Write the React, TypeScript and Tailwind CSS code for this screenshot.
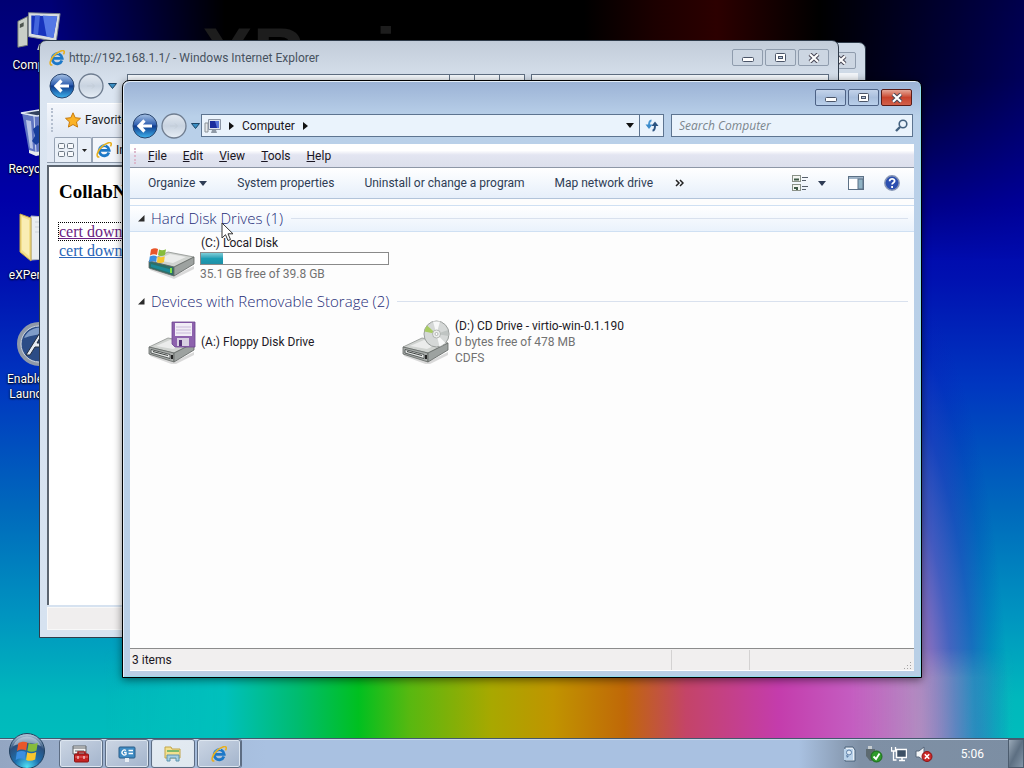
import type { ReactNode } from "react";

const menuItems = ["File", "Edit", "View", "Tools", "Help"];

const commands = [
  "System properties",
  "Uninstall or change a program",
  "Map network drive",
];

function CaretDown() {
  return (
    <svg width="8" height="5" viewBox="0 0 8 5">
      <path d="M0 0h8L4 5z" fill="currentColor" />
    </svg>
  );
}

function CaretRight() {
  return (
    <svg width="5" height="8" viewBox="0 0 5 8">
      <path d="M0 0v8l5-4z" fill="#111" />
    </svg>
  );
}

function IeIcon() {
  return (
    <svg width="16" height="16" viewBox="0 0 16 16">
      <path
        d="M12.900 10.500A5 5 0 1 1 13.200 8.300H4.500"
        fill="none"
        stroke="#1c78c8"
        strokeWidth="2.8"
      />
      <path d="M3.400 7A5 5 0 0 1 10 3.600" fill="none" stroke="#6fc8f4" strokeWidth="1" />
      <path
        d="M3.400 15C-.6 15.600 1 9 6 4.600 10 1 14.600-.4 15.200 1.400c.3 1-.2 2-.8 3"
        fill="none"
        stroke="#e8b020"
        strokeWidth="1.600"
      />
    </svg>
  );
}

function MonitorIcon() {
  return (
    <svg width="46" height="46" viewBox="0 0 48 48">
      <path d="M2 16l10-5v30l-10 2z" fill="#c9cfc8" stroke="#6f7672" />
      <path d="M4 19l4-2v4l-4 2z" fill="#4d554f" />
      <path d="M24 40l10-4 6 4-6 6H22z" fill="#b9c0c4" />
      <path d="M13 7l33 1-4 29-29-5z" fill="#d9dee2" stroke="#7c858c" />
      <path d="M16 10l27 1-4 22-23-4z" fill="#1733bd" />
      <path d="M28 10l15 1-4 22-7-1z" fill="#5478e6" />
      <path d="M20 10h5l-2 20-5-1z" fill="#4465dc" />
    </svg>
  );
}

function SmallMonitorIcon() {
  return (
    <svg width="17" height="16" viewBox="0 0 17 16">
      <path d="M1 5h3v9H1z" fill="#e4e7ea" stroke="#8b9297" />
      <path d="M8 12h4l1 3H7z" fill="#8f9aa6" />
      <path d="M4.500 1.500h12v10h-12z" fill="#dfe4ec" stroke="#8b95a5" />
      <path d="M6 3h9v7H6z" fill="#1b2d9e" />
      <path d="M11 3h4v7h-2z" fill="#5673d8" />
    </svg>
  );
}

function NavButtons() {
  return (
    <div className="flex items-center gap-[5px]">
      <button aria-label="Back" className="size-6">
        <svg width="26" height="26" viewBox="0 0 26 26" className="-ml-px -mt-px">
          <defs>
            <linearGradient id="back" x1="0" y1="0" x2="0" y2="1">
              <stop offset="0" stopColor="#a9c4e6" />
              <stop offset="0.45" stopColor="#2f5fb0" />
              <stop offset="0.5" stopColor="#0f3a8c" />
              <stop offset="1" stopColor="#3fb4ee" />
            </linearGradient>
          </defs>
          <circle cx="13" cy="13" r="12" fill="url(#back)" stroke="#29456e" />
          <path
            d="M20 13H8M12.500 7.500L7 13l5.500 5.500"
            fill="none"
            stroke="#fff"
            strokeWidth="3.200"
          />
        </svg>
      </button>
      <button aria-label="Forward" className="size-6">
        <svg width="26" height="26" viewBox="0 0 26 26" className="-ml-px -mt-px">
          <defs>
            <linearGradient id="forward" x1="0" y1="0" x2="0" y2="1">
              <stop offset="0" stopColor="#e3e9f1" />
              <stop offset="0.5" stopColor="#c8d3e0" />
              <stop offset="1" stopColor="#e6eef6" />
            </linearGradient>
          </defs>
          <circle cx="13" cy="13" r="12" fill="url(#forward)" stroke="#6f7d90" strokeWidth="1.300" />
          <path d="M9 13h7M14 10.500l2.500 2.500-2.500 2.500" fill="none" stroke="#c3cdd8" />
        </svg>
      </button>
      <button aria-label="Recent pages">
        <svg width="9" height="6" viewBox="0 0 9 6">
          <path d="M.5.5h8l-4 5z" fill="#3b8fc4" stroke="#1d4566" />
        </svg>
      </button>
    </div>
  );
}

function WindowButtons({ active = false }: { active?: boolean }) {
  const base = active
    ? "border-[#4d6285] bg-linear-to-b from-[#c3d3ea] via-[#a9bfdd] to-[#b9cfea]"
    : "border-[#8f9cad] bg-[#ccd6e2]";
  const close = active
    ? "border-[#5a1c18] bg-linear-to-b from-[#e3a596] via-[#c8432c] to-[#d2604a]"
    : "border-[#8f9cad] bg-[#ccd6e2]";

  return (
    <div className="flex gap-0.5">
      <button
        aria-label="Minimize"
        className={`flex h-[17px] w-[31px] items-center justify-center rounded-[2px] border ${base}`}
      >
        <svg width="12" height="9" viewBox="0 0 12 9">
          <rect x=".5" y="4.5" width="11" height="4" rx="1" fill="#fff" stroke="#4b5568" />
        </svg>
      </button>
      <button
        aria-label="Maximize"
        className={`flex h-[17px] w-[31px] items-center justify-center rounded-[2px] border ${base}`}
      >
        <svg width="11" height="9" viewBox="0 0 11 9">
          <rect x=".5" y=".5" width="10" height="8" rx="1" fill="#fff" stroke="#4b5568" />
          <rect x="3.500" y="3.500" width="4" height="2" fill="#b9c8de" stroke="#4b5568" />
        </svg>
      </button>
      <button
        aria-label="Close"
        className={`flex h-[17px] w-[31px] items-center justify-center rounded-[2px] border ${close}`}
      >
        <svg width="12" height="10" viewBox="0 0 12 10">
          <path d="M2 1.200l8 7.600M10 1.200L2 8.800" stroke="#4b4a58" strokeWidth="4.200" />
          <path d="M2 1.200l8 7.600M10 1.200L2 8.800" stroke="#fff" strokeWidth="2.200" />
        </svg>
      </button>
    </div>
  );
}

function DriveBody({ y, system }: { y: number; system?: boolean }) {
  return (
    <g transform={`translate(0 ${y})`}>
      <path d="M2 15l24 9 20-10v3L26 27 2 18z" fill="#000" opacity=".14" />
      <path d="M1 9L20 0l26 5-20 10z" fill="#d0d3d0" stroke="#8d918e" strokeWidth=".8" />
      <path d="M8 8l14-6 16 3-13 6z" fill="#ebeceb" />
      <path
        d="M1 9l25 6v9L1 16z"
        fill={system ? "#2d6f68" : "#a8acaa"}
        stroke="#5f6462"
        strokeWidth=".8"
      />
      <path d="M26 15l20-10v7L26 24z" fill="#9da2a0" stroke="#5f6462" strokeWidth=".8" />
      {system ? (
        <>
          <path d="M3 12l20 5.500V21L3 15z" fill="#1d8896" />
          <rect x="22" y="16" width="2" height="5" fill="#7fe04a" />
        </>
      ) : (
        <>
          <path d="M3 11.500l19 5v4L3 15z" fill="#e4e6e5" stroke="#3e4341" strokeWidth=".8" />
          <path d="M5 13.500l15 4" stroke="#3e4341" />
          <rect x="23" y="17" width="2" height="4" fill="#222" />
        </>
      )}
    </g>
  );
}

function WindowsFlag() {
  return (
    <>
      <path d="M1 2.500C3.500 1 6 1 8 2L7 8C5 7 2.500 7 0 8.500z" fill="#e8562a" />
      <path d="M9 2.400c2 1 4.500 1 7-.2L15 8c-2.500 1.300-5 1.300-7 .3z" fill="#86bc3c" />
      <path d="M-.2 9.500c2.500-1.300 5-1.300 7-.3L6 15c-2-1-4.500-1-7 .3z" fill="#3a8ee0" />
      <path d="M7.800 9.500c2 1 4.500 1 7-.2L14 15c-2.500 1.300-5 1.300-7 .3z" fill="#f7c62e" />
    </>
  );
}

function LocalDiskIcon() {
  return (
    <svg width="48" height="44" viewBox="0 0 48 44">
      <DriveBody y={15} system />
      <g transform="translate(2 10)">
        <WindowsFlag />
      </g>
    </svg>
  );
}

function FloppyDriveIcon() {
  return (
    <svg width="48" height="44" viewBox="0 0 48 44">
      <DriveBody y={18} />
      <path d="M24 2h23v25H27l-3-3z" fill="#8d62ad" stroke="#6c4590" strokeWidth=".8" />
      <rect x="27" y="3" width="17" height="13" fill="#f1edf6" />
      <path d="M28 7h15M28 10h15M28 13h15" stroke="#c9b9da" />
      <rect x="29" y="18" width="12" height="8" fill="#d8cfe2" />
      <rect x="31" y="20" width="3" height="6" fill="#57347a" />
    </svg>
  );
}

function CdDriveIcon() {
  return (
    <svg width="48" height="44" viewBox="0 0 48 44">
      <DriveBody y={18} />
      <ellipse cx="34.500" cy="14" rx="12.500" ry="13" fill="#d5d8d7" stroke="#9a9e9c" />
      <path d="M34.500 14L25 5.500a12 12 0 0 0-2.500 6z" fill="#a8cc62" />
      <path d="M34.500 14L31 1.500l7 0z" fill="#f7f8f8" />
      <path d="M34.500 14l9 9-6 3.500z" fill="#f7f8f8" />
      <path d="M34.500 14L46 10l.5 6z" fill="#bfc4c2" />
      <circle cx="34.500" cy="14" r="4" fill="#eceeed" stroke="#a4a8a6" strokeWidth=".8" />
      <circle cx="34.500" cy="14" r="1.500" fill="#fff" stroke="#8b8f8d" strokeWidth=".6" />
    </svg>
  );
}

function RecycleBinIcon() {
  return (
    <svg width="40" height="48" viewBox="0 0 40 48">
      <path d="M3 5l30-2 4 2-6 38-15 3-6-3z" fill="#7f9bd0" opacity=".75" />
      <path d="M3 5l12 3 22-3M15 8l2 37" fill="none" stroke="#d3def2" />
      <path d="M2 5l18-3 18 3-20 3z" fill="#33415f" stroke="#dfe7f4" strokeWidth="1.500" />
      <path d="M7 12l5 1 2 28-3-1z" fill="#dbe4f5" opacity=".7" />
      <path d="M14 21l5-4 4 5-3 3 3 7-6 5-4-4 3-5z" fill="#183e9c" />
      <path d="M10 42l7 2 14-2v3l-14 3-7-3z" fill="#e7ecec" />
    </svg>
  );
}

function FolderIcon() {
  return (
    <svg width="44" height="50" viewBox="0 0 44 50">
      <path d="M14 4l28 2v40l-28 2z" fill="#e9ecf0" stroke="#b5bac2" />
      <path d="M3 2l11 4v43L3 40z" fill="#f2df8c" stroke="#c5a74a" />
      <path d="M5 5l7 3v36l-7-6z" fill="#f9edb4" />
      <path d="M18 10h20M18 15h20M18 20h20" stroke="#cdd2d9" />
    </svg>
  );
}

function LauncherIcon() {
  return (
    <svg width="44" height="44" viewBox="0 0 44 44">
      <circle cx="22" cy="22" r="20" fill="#2b4c86" stroke="#8f99a8" strokeWidth="4" />
      <circle cx="22" cy="22" r="18" fill="none" stroke="#d3d9e1" />
      <path d="M7 16a17 17 0 0 1 29-4c-10-1-20 1-29 4z" fill="#7f9cc8" />
      <path d="M9 33L24 9h4v25h-4v-9h-6l-5 8zM20 21h4v-7z" fill="#e6ebf2" stroke="#222c3c" />
    </svg>
  );
}

function DesktopIcon({ icon, children }: { icon: ReactNode; children: ReactNode }) {
  return (
    <a
      href="#"
      className="flex w-[78px] flex-col items-center gap-1.5 text-center text-[12px] leading-[15px] text-white [text-shadow:0_1px_2px_#000,0_0_2px_#000]"
    >
      {icon}
      <span>{children}</span>
    </a>
  );
}

function GroupHeader({
  id,
  title,
  hovered = false,
}: {
  id: string;
  title: string;
  hovered?: boolean;
}) {
  return (
    <div
      className={`flex h-[27px] items-center border-y pb-px pl-2 pr-1.5 ${
        hovered
          ? "border-[#cfe0f3] bg-linear-to-b from-white to-[#eaf2fc]"
          : "border-transparent"
      }`}
    >
      <svg width="7" height="7" viewBox="0 0 7 7">
        <path d="M6.500 0v6.500H0z" fill="#2b2b2b" />
      </svg>
      <h2
        id={id}
        className="ml-1.5 font-['Open_Sans',sans-serif] text-[15px] font-light leading-5 text-[#1e2c78]"
      >
        {title}
      </h2>
      <div className="ml-2 h-px flex-1 bg-[#d9e1ee]" />
    </div>
  );
}

function InternetExplorer() {
  return (
    <section
      aria-label="Windows Internet Explorer"
      className="absolute bottom-[100px] left-[39px] right-[185px] top-[40px] flex flex-col rounded-t-[7px] border border-[#2f3b4a] bg-linear-to-b from-[#c2ccd9] via-[#dbe5f1] via-8% to-[#d6e2f0] px-[7px] pb-[7px]"
    >
      <header className="flex h-[33px] items-center gap-1 px-0.5">
        <IeIcon />
        <h1 className="flex-1 text-[12px] text-[#47525f]">
          http://192.168.1.1/ - Windows Internet Explorer
        </h1>
        <WindowButtons />
      </header>
      <div className="flex h-[29px] items-start gap-2.5 pl-[3px]">
        <NavButtons />
        <div className="flex flex-1">
          <input
            aria-label="Address"
            className="h-[22px] flex-1 border border-[#5f6f82] bg-[#f4f8fc]"
          />
          <div className="w-[25px] border-y border-r border-[#5f6f82] bg-[#f4f8fc]" />
          <div className="w-[25px] border-y border-r border-[#5f6f82] bg-[#f4f8fc]" />
          <div className="w-[25px] border-y border-r border-[#5f6f82] bg-[#f4f8fc]" />
        </div>
        <input
          aria-label="Search"
          className="-ml-1 mr-0.5 h-[22px] w-[298px] border border-[#5f6f82] bg-[#f4f8fc]"
        />
      </div>
      <div className="flex h-8 items-center border-t border-white bg-linear-to-b from-[#f4f7fc] to-[#e2e9f4] pl-1">
        <div className="h-6 border-l-2 border-dotted border-[#b5bfcf]" />
        <button className="ml-3 flex items-center gap-1 text-[12px] text-[#222]">
          <svg width="16" height="16" viewBox="0 0 16 16">
            <path
              d="M8 .8l2.200 4.900 5.300.6-4 3.600 1.100 5.200L8 12.500l-4.600 2.600 1.100-5.200-4-3.600 5.300-.6z"
              fill="#fbb326"
              stroke="#c77a0c"
            />
          </svg>
          Favorites
        </button>
      </div>
      <div className="flex h-7 items-end border-b border-[#8d99aa] bg-[#e2e9f4] pl-[7px]">
        <div className="flex h-[25px] items-center rounded-t-[2px] border border-b-0 border-[#98a4b5] bg-[#eaf0f8]">
          <button aria-label="Quick tabs" className="flex h-full w-[22px] items-center justify-center">
            <svg width="16" height="14" viewBox="0 0 16 14" fill="#f7f9fc" stroke="#6d7885">
              <rect x=".5" y=".5" width="6" height="5" rx="1" />
              <rect x="9.500" y=".5" width="6" height="5" rx="1" />
              <rect x=".5" y="8.500" width="6" height="5" rx="1" />
              <rect x="9.500" y="8.500" width="6" height="5" rx="1" />
            </svg>
          </button>
          <button
            aria-label="Tab list"
            className="flex h-full w-[14px] items-center justify-center border-l border-[#98a4b5] text-[#222]"
          >
            <svg width="5" height="3" viewBox="0 0 5 3">
              <path d="M0 0h5L2.500 3z" fill="currentColor" />
            </svg>
          </button>
        </div>
        <div className="flex h-[25px] w-[200px] items-center gap-1 border border-b-0 border-[#98a4b5] bg-[#f3f6fb] pl-[3px] text-[12px] text-[#222]">
          <IeIcon />
          Internet
        </div>
      </div>
      <div className="mt-0.5 flex-1 border-l-2 border-t-2 border-[#5c6570] bg-white px-2.5 pt-[15px] font-['Liberation_Serif',serif]">
        <h2 className="text-[19px] font-bold leading-5 text-black">CollabNet</h2>
        <ul className="mt-5 text-[16px] leading-[19px]">
          <li>
            <a
              href="#"
              className="text-[#6b1d82] underline outline-1 outline-dotted outline-black"
            >
              cert download
            </a>
          </li>
          <li>
            <a href="#" className="text-[#2a65b8] underline">
              cert download
            </a>
          </li>
        </ul>
      </div>
      <footer className="mt-0.5 h-[23px] border border-[#f8f8f8] bg-[#f0eeee]" />
    </section>
  );
}

function Explorer() {
  return (
    <section
      aria-label="Computer"
      className="absolute bottom-[60px] left-[122px] right-[102px] top-[80px] flex flex-col rounded-t-[7px] border border-black bg-linear-to-b from-[#9bb2d5] via-[#b9d0e9] via-6% to-[#b9cfe6] px-[7px] pb-1.5 shadow-[inset_1px_1px_0_#e3edf8,inset_-1px_-1px_0_#8fdcec,0_2px_8px_rgba(0,0,0,0.5)]"
    >
      <header className="flex h-[33px] justify-end pr-0.5 pt-2">
        <WindowButtons active />
      </header>
      <div className="flex h-[30px] items-start gap-px pl-[3px]">
        <NavButtons />
        <div className="flex h-[23px] flex-1 border border-[#5d7490] bg-[#eaf3fc]">
          <div className="flex flex-1 items-center gap-2 pl-0.5 text-[12px] text-[#1a1522]">
            <SmallMonitorIcon />
            <CaretRight />
            <a href="#">Computer</a>
            <CaretRight />
          </div>
          <button
            aria-label="Previous locations"
            className="flex w-[19px] items-center justify-center text-[#111]"
          >
            <CaretDown />
          </button>
          <button
            aria-label="Refresh"
            className="flex w-6 items-center justify-center border-l border-[#5d7490]"
          >
            <svg width="14" height="13" viewBox="0 0 14 13" fill="none" strokeWidth="2">
              <path d="M6.500 1.500C4.500 1.500 4 3 4 6.500" stroke="#4a97d2" />
              <path d="M.5 5.500h7L4 10z" fill="#3b8bcb" />
              <path d="M7.500 11.500c2 0 2.500-1.500 2.500-5" stroke="#2c5482" />
              <path d="M6.500 7h7L10 2.500z" fill="#2c5482" />
            </svg>
          </button>
        </div>
        <div className="ml-1.5 mr-px flex h-[23px] w-[242px] items-center border border-[#5d7490] bg-[#eaf3fc] pr-1">
          <input
            aria-label="Search Computer"
            placeholder="Search Computer"
            className="min-w-0 flex-1 pl-[7px] font-['Open_Sans',sans-serif] text-[12px] italic outline-none placeholder:text-[#7b858c]"
          />
          <svg width="13" height="13" viewBox="0 0 13 13" fill="none" stroke="#43617f">
            <circle cx="8" cy="5" r="3.800" strokeWidth="1.600" />
            <path d="M5 8l-4 4" strokeWidth="2.400" />
          </svg>
        </div>
      </div>
      <nav className="flex h-[23px] items-center gap-4 border-t border-white bg-linear-to-b from-white from-25% via-[#e3e5f1] via-45% to-[#dcdfec] pb-px pl-1 text-[12px] text-[#1a1522]">
        <div className="-mr-1 h-4 border-l-2 border-dotted border-[#dcb9cd]" />
        {menuItems.map((item) => (
          <button key={item}>
            <span className="underline">{item[0]}</span>
            {item.slice(1)}
          </button>
        ))}
      </nav>
      <div className="flex h-8 items-center gap-[30px] border-y border-t-[#8d96a6] border-b-[#b2c4da] bg-linear-to-b from-white to-[#e6effa] pl-[18px] pr-3.5 text-[12px] text-[#2e3c54]">
        <button className="flex items-center gap-1">
          Organize
          <CaretDown />
        </button>
        {commands.map((command) => (
          <button key={command} className="whitespace-nowrap">
            {command}
          </button>
        ))}
        <button aria-label="More commands" className="-ml-2">
          <svg width="9" height="8" viewBox="0 0 9 8" fill="none" stroke="#222" strokeWidth="1.500">
            <path d="M1 1l3 3-3 3M5 1l3 3-3 3" />
          </svg>
        </button>
        <div className="ml-auto flex items-center">
          <button aria-label="Change your view" className="flex items-center gap-2.5">
            <svg width="16" height="16" viewBox="0 0 16 16">
              <rect x=".5" y=".5" width="8" height="6" fill="#f4f6f2" stroke="#8a9188" />
              <rect x=".5" y="9.500" width="8" height="6" fill="#f4f6f2" stroke="#8a9188" />
              <path d="M2 4.500h5M2 13h2M5 12v3" stroke="#3f5a48" strokeWidth="2" />
              <path d="M10 2.500h6M10 5.500h4M10 11.500h6M10 14.500h4" stroke="#565f6b" />
            </svg>
            <CaretDown />
          </button>
          <button aria-label="Show the preview pane" className="ml-[22px]">
            <svg width="16" height="14" viewBox="0 0 16 14">
              <rect x=".5" y=".5" width="15" height="13" fill="#fff" stroke="#5c7186" />
              <path d="M1 2h14" stroke="#9fb4c8" strokeWidth="2" />
              <rect x="10" y="3" width="5" height="10" fill="#8fb2c4" stroke="#5c7186" />
            </svg>
          </button>
          <button aria-label="Get help" className="ml-5">
            <svg width="16" height="16" viewBox="0 0 16 16">
              <circle cx="8" cy="8" r="7.200" fill="#2b4fb0" stroke="#8796b5" strokeWidth="1.500" />
              <path
                d="M5.600 6.200c0-3.200 5-3 5-.2 0 1.900-2.500 1.800-2.500 3.600M8.100 11v2"
                fill="none"
                stroke="#fff"
                strokeWidth="1.800"
              />
            </svg>
          </button>
        </div>
      </div>

      <main className="flex flex-1 flex-col gap-1.5 bg-[#fdfdfd] pt-1.5 text-[12px] leading-4">
        <section aria-labelledby="hard-disks">
          <GroupHeader id="hard-disks" title="Hard Disk Drives (1)" hovered />
          <ul className="flex pl-[18px] pt-[3px]">
            <li className="flex items-center gap-1">
              <LocalDiskIcon />
              <div>
                <p className="pl-px text-[#221a26]">(C:) Local Disk</p>
                <div
                  role="meter"
                  aria-label="Used space"
                  aria-valuemin={0}
                  aria-valuemax={398}
                  aria-valuenow={47}
                  className="my-px h-[13px] w-[189px] border border-[#8a8a8a] bg-white"
                >
                  <div
                    className="h-full bg-linear-to-b from-[#7ccfda] via-[#1c9db3] to-[#1f8fa6]"
                    style={{ width: `${(4.7 / 39.8) * 100}%` }}
                  />
                </div>
                <p className="text-[#727272]">35.1 GB free of 39.8 GB</p>
              </div>
            </li>
          </ul>
        </section>
        <section aria-labelledby="removable">
          <GroupHeader id="removable" title="Devices with Removable Storage (2)" />
          <ul className="flex pl-[18px] pt-[3px]">
            <li className="flex w-[254px] items-center gap-[5px]">
              <FloppyDriveIcon />
              <p className="text-[#221a26]">(A:) Floppy Disk Drive</p>
            </li>
            <li className="flex items-center gap-[5px]">
              <CdDriveIcon />
              <div>
                <p className="text-[#221a26]">(D:) CD Drive - virtio-win-0.1.190</p>
                <p className="text-[#727272]">0 bytes free of 478 MB</p>
                <p className="text-[#727272]">CDFS</p>
              </div>
            </li>
          </ul>
        </section>
      </main>

      <footer className="flex h-[23px] items-center border-b border-t border-b-white border-t-[#8c8c8c] bg-[#f1efef] pt-px text-[12px] text-[#1a1522]">
        <span className="flex-1 pl-0.5">3 items</span>
        <span className="h-5 w-[78px] border-l border-[#d4d2d2]" />
        <span className="flex h-5 w-[165px] items-end justify-end border-l border-[#d4d2d2] pr-0.5">
          <svg width="8" height="8" viewBox="0 0 8 8" fill="#a5a3a3">
            <path d="M6 0h1v1H6zM3 3h1v1H3zM6 3h1v1H6zM0 6h1v1H0zM3 6h1v1H3zM6 6h1v1H6z" />
          </svg>
        </span>
      </footer>
    </section>
  );
}

function TaskButton({
  label,
  active = false,
  children,
}: {
  label: string;
  active?: boolean;
  children: ReactNode;
}) {
  return (
    <button
      aria-label={label}
      className={`flex h-[29px] w-11 items-center justify-center rounded-[3px] border border-[#5d6d83] shadow-[inset_0_0_0_1px_#dde6f0] ${
        active
          ? "bg-linear-to-br from-[#e4ebf3] to-[#dfe8ee]"
          : "bg-linear-to-br from-[#ccd6e4] to-[#a3b4cc]"
      }`}
    >
      {children}
    </button>
  );
}

function Taskbar() {
  return (
    <footer className="relative flex h-[30px] items-center border-t border-[#44586e] bg-[linear-gradient(90deg,#93a6c2_0%,#a9c1e1_26%,#a9c1e1_78%,#7f90a5_84%,#7c8ea3_100%)] shadow-[inset_0_1px_0_#c9d8ea]">
      <button aria-label="Start" className="-mt-2 ml-2 size-9">
        <svg width="38" height="38" viewBox="0 0 38 38">
          <defs>
            <radialGradient id="orb" cx=".5" cy=".95" r=".9">
              <stop offset="0" stopColor="#4fe0f4" />
              <stop offset=".4" stopColor="#1d6fae" />
              <stop offset=".75" stopColor="#2b4f7c" />
              <stop offset="1" stopColor="#a9bed2" />
            </radialGradient>
          </defs>
          <circle cx="19" cy="19" r="17.500" fill="url(#orb)" stroke="#20405f" />
          <path d="M5 14a15 15 0 0 1 28 0c-9-4-19-4-28 0z" fill="#d5e3ee" opacity=".5" />
          <g transform="translate(9 8) scale(1.300)">
            <WindowsFlag />
          </g>
        </svg>
      </button>
      <div className="ml-[15px] flex gap-0.5">
        <TaskButton label="Toolbox">
          <svg width="18" height="18" viewBox="0 0 18 18">
            <path d="M1 1h13v8H1z" fill="#f1f1f1" stroke="#5f6468" />
            <path d="M1 3h13M3 6h9" stroke="#5f6468" />
            <path d="M6 9V7h7v2" fill="none" stroke="#9e1616" strokeWidth="1.500" />
            <rect x="2.500" y="9" width="14" height="8" rx="1" fill="#c42222" stroke="#8c1212" />
            <path d="M3 12h13" stroke="#e86a6a" />
            <path d="M6 11v3M12 11v3" stroke="#fff" />
          </svg>
        </TaskButton>
        <TaskButton label="Control Panel">
          <svg width="18" height="18" viewBox="0 0 18 18">
            <rect x="1" y="2" width="16" height="11" rx="1" fill="#3f8cc4" stroke="#2a5d88" />
            <path
              d="M8 5.500A2.500 2.500 0 1 0 8 9.500V7.500H6"
              fill="none"
              stroke="#fff"
              strokeWidth="1.300"
            />
            <path d="M10.500 5.500H15M10.500 8.500H15" stroke="#fff" strokeWidth="1.500" />
            <path d="M7 13h4v4H7z" fill="#e8eef4" />
          </svg>
        </TaskButton>
        <TaskButton label="Windows Explorer" active>
          <svg width="18" height="18" viewBox="0 0 18 18">
            <path d="M1 2h6l1 2h8v9H1z" fill="#f3e08f" stroke="#c2a548" />
            <path d="M3 6h12" stroke="#7fb86c" strokeWidth="2" />
            <path d="M3 16V10h12v6h-3v-3H6v3z" fill="#a6cfe2" stroke="#5d93ae" />
          </svg>
        </TaskButton>
        <div className="flex">
          <TaskButton label="Internet Explorer">
            <IeIcon />
          </TaskButton>
          <div className="-ml-0.5 h-[29px] w-[3px] rounded-r-[3px] border-r border-[#5d6d83]" />
        </div>
      </div>
      <div className="ml-auto flex items-center gap-2">
        <svg width="16" height="16" viewBox="0 0 16 16">
          <path d="M4 1h8l2 3v11H4z" fill="#e8f0f8" stroke="#49617a" />
          <path d="M3 3h9v11H3z" fill="#b9d2ea" />
          <circle cx="8" cy="6.500" r="2.500" fill="#dbe8f4" stroke="#5d7fa8" />
          <path d="M6 12l-1-3 3 1z" fill="#5d7fa8" />
        </svg>
        <svg width="18" height="18" viewBox="0 0 18 18">
          <path d="M1 4h9v7l-3 5H5l-4-5z" fill="#5d6a70" />
          <path d="M3 1h4v3H3z" fill="#c8ced2" />
          <circle cx="11.500" cy="11.500" r="5.500" fill="#2f9a2b" stroke="#1b6a1a" />
          <path d="M8.500 11.500l2.500 2.500 3.500-5.500" fill="none" stroke="#fff" strokeWidth="1.800" />
        </svg>
        <svg width="16" height="16" viewBox="0 0 16 16" fill="none" stroke="#fff">
          <path d="M5.500 3.500h10v8h-10zM8 14.500h6M11 12v2" strokeWidth="1.500" fill="#3c4f64" />
          <path d="M.5 1v4h4V1M2.500 5v9h3" strokeWidth="1.300" />
        </svg>
        <svg width="18" height="16" viewBox="0 0 18 16">
          <path d="M1 5h3l5-4v14l-5-4H1z" fill="#f4f6f8" stroke="#56677a" />
          <circle cx="12" cy="10.500" r="5" fill="#cc2a2a" stroke="#8d1414" />
          <path d="M9.800 8.300l4.400 4.400M14.200 8.300l-4.400 4.400" stroke="#fff" strokeWidth="1.600" />
        </svg>
      </div>
      <time className="ml-7 mr-6 text-[12px] text-white">5:06</time>
      <button
        aria-label="Show desktop"
        className="h-full w-4 border border-[#4c5c6e] bg-linear-to-br from-[#9aa9b8] via-[#5d6f82] to-[#8496a8]"
      />
    </footer>
  );
}

export default function App() {
  return (
    <div className="relative flex min-h-screen flex-col overflow-hidden bg-[#0000a8] font-['Roboto','Noto_Sans',sans-serif]">
      {/* wallpaper: blue field, violet flare on the right, black sky and a rainbow floor */}
      <div className="absolute inset-0 bg-[linear-gradient(180deg,#000074_0%,#0000a8_26%,#0010b0_36%,#0036c0_50%,#0068bc_66%,#0094c0_80%,#00b8bc_91%,#00c0bc_100%)]" />
      <div className="absolute inset-0 bg-[radial-gradient(ellipse_150px_530px_at_84%_100%,#c878c4_0%,#b490c4_38%,rgba(140,104,192,0.9)_52%,rgba(90,80,192,0.75)_64%,rgba(50,50,188,0.45)_78%,rgba(20,20,180,0.15)_90%,rgba(0,0,176,0)_100%)]" />
      <div className="absolute inset-x-0 bottom-0 h-[120px] bg-[linear-gradient(90deg,transparent_10%,#00c0bc_22%,#00bc70_29%,#00c020_35%,#58b810_40%,#a8a800_48%,#c09400_54%,#c06808_61%,#c44468_67%,#c43cac_76%,#c45cc0_83%,rgba(176,140,192,0.8)_90%,rgba(60,160,192,0.5)_95%,transparent_99%)] [mask-image:linear-gradient(transparent,#000_25%)]" />
      <div className="absolute inset-x-0 top-0 h-[260px] bg-[linear-gradient(90deg,transparent_5%,#000_22%,#000_57%,#1c0000_64%,#2c0000_70%,#000_80%,transparent_110%)] [mask-image:linear-gradient(#000_30%,transparent)]" />
      <p className="absolute left-[202px] top-[17px] font-['Liberation_Sans',sans-serif] text-[76px] font-bold leading-none text-[#1d1d1d]">
        XPerience
      </p>

      <div className="relative flex-1">
        <div className="flex flex-col gap-[35px] pt-1.5">
          <DesktopIcon icon={<MonitorIcon />}>Computer</DesktopIcon>
          <DesktopIcon icon={<RecycleBinIcon />}>Recycle Bin</DesktopIcon>
          <DesktopIcon icon={<FolderIcon />}>eXPerience</DesktopIcon>
          <div className="pt-1">
            <DesktopIcon icon={<LauncherIcon />}>
              Enable Aero
              <br />
              Launch bar
            </DesktopIcon>
          </div>
        </div>

        <section
          aria-label="Background window"
          className="absolute bottom-[120px] left-[200px] right-[158px] top-[42px] rounded-t-[7px] border border-[#2f3b4a] bg-[#cfdae7] px-[7px]"
        >
          <header className="flex h-[30px] items-center justify-end pr-0.5 pt-1">
            <WindowButtons />
          </header>
          <div className="h-20 bg-[#f3f6fa]" />
        </section>
        <InternetExplorer />
        <Explorer />

        <svg
          width="13"
          height="20"
          viewBox="0 0 13 20"
          className="absolute left-[221px] top-[222px]"
        >
          <path
            d="M1 1v15l3.500-3.300L7 18.500l2.500-1-2.500-5.700h5z"
            fill="#fff"
            stroke="#333"
          />
        </svg>
      </div>

      <Taskbar />
    </div>
  );
}
